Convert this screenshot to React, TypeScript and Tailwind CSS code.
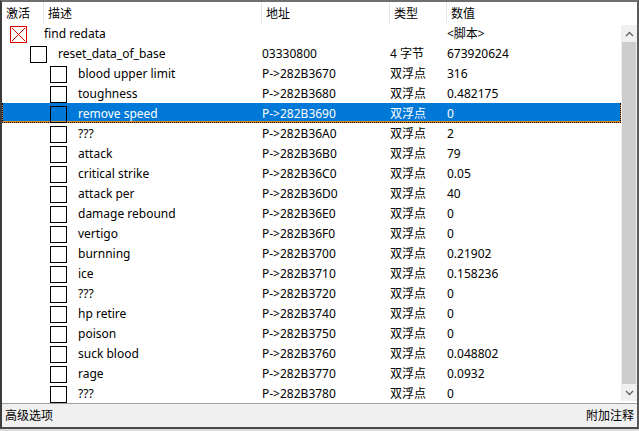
import { ReactNode } from 'react';

type Entry = {
  desc: string;
  level: number;
  addr: string;
  type: string;
  value: string;
  script?: boolean;
};

const entries: Entry[] = [
  { desc: 'find redata', level: 0, addr: '', type: '', value: '<脚本>', script: true },
  { desc: 'reset_data_of_base', level: 1, addr: '03330800', type: '4 字节', value: '673920624' },
  { desc: 'blood upper limit', level: 2, addr: 'P->282B3670', type: '双浮点', value: '316' },
  { desc: 'toughness', level: 2, addr: 'P->282B3680', type: '双浮点', value: '0.482175' },
  { desc: 'remove speed', level: 2, addr: 'P->282B3690', type: '双浮点', value: '0' },
  { desc: '???', level: 2, addr: 'P->282B36A0', type: '双浮点', value: '2' },
  { desc: 'attack', level: 2, addr: 'P->282B36B0', type: '双浮点', value: '79' },
  { desc: 'critical strike', level: 2, addr: 'P->282B36C0', type: '双浮点', value: '0.05' },
  { desc: 'attack per', level: 2, addr: 'P->282B36D0', type: '双浮点', value: '40' },
  { desc: 'damage rebound', level: 2, addr: 'P->282B36E0', type: '双浮点', value: '0' },
  { desc: 'vertigo', level: 2, addr: 'P->282B36F0', type: '双浮点', value: '0' },
  { desc: 'burnning', level: 2, addr: 'P->282B3700', type: '双浮点', value: '0.21902' },
  { desc: 'ice', level: 2, addr: 'P->282B3710', type: '双浮点', value: '0.158236' },
  { desc: '???', level: 2, addr: 'P->282B3720', type: '双浮点', value: '0' },
  { desc: 'hp retire', level: 2, addr: 'P->282B3740', type: '双浮点', value: '0' },
  { desc: 'poison', level: 2, addr: 'P->282B3750', type: '双浮点', value: '0' },
  { desc: 'suck blood', level: 2, addr: 'P->282B3760', type: '双浮点', value: '0.048802' },
  { desc: 'rage', level: 2, addr: 'P->282B3770', type: '双浮点', value: '0.0932' },
  { desc: '???', level: 2, addr: 'P->282B3780', type: '双浮点', value: '0' },
];

const SELECTED = 4;

const indent = ['ml-[8px]', 'ml-[28px]', 'ml-[48px]'];

function CheckBox({ script }: { script?: boolean }) {
  if (script) {
    return (
      <svg width="17" height="17" viewBox="0 0 17 17" className="shrink-0">
        <rect x="0.5" y="0.5" width="16" height="16" fill="white" stroke="#e00000" />
        <path d="M2 2 L15 15 M15 2 L2 15" stroke="#e00000" strokeWidth="1" />
      </svg>
    );
  }
  return <div className="h-[17px] w-[17px] shrink-0 border border-black" />;
}

function HeaderCell({ w, first, children }: { w: string; first?: boolean; children: ReactNode }) {
  return (
    <div className={`${w} flex h-full items-center pl-[4px] pt-[2px] ${first ? '' : 'border-l border-[#e5e5e5]'}`}>
      {children}
    </div>
  );
}

function RowContent({ e }: { e: Entry }) {
  return (
    <div className="flex h-[20px] w-full items-center pt-[2px]">
      <div className="flex w-[259px] items-center">
        <div className={`${indent[e.level]} mt-[1px]`}>
          <CheckBox script={e.script} />
        </div>
        <span className={e.level === 0 ? 'ml-[17px]' : 'ml-[11px]'}>{e.desc}</span>
      </div>
      <div className="w-[128px] pl-px">{e.addr}</div>
      <div className="w-[57px] pl-px">{e.type}</div>
      <div className="flex-1 pl-px">{e.value}</div>
    </div>
  );
}

function Row({ e, selected }: { e: Entry; selected: boolean }) {
  if (selected) {
    // focus rect: black dots over an orange backing, blue fill inside
    return (
      <div className="h-[20px] border border-dotted border-black bg-[#d98a22]">
        <div className="h-full bg-[#0078d7] text-white">
          <div className="-ml-px -mt-px w-[calc(100%+2px)]">
            <RowContent e={e} />
          </div>
        </div>
      </div>
    );
  }
  return <RowContent e={e} />;
}

function Chevron({ up }: { up?: boolean }) {
  return (
    <div className="flex h-[17px] items-center justify-center">
      <svg width="9" height="6" viewBox="0 0 9 6">
        <path d={up ? 'M1 5 L4.5 1.5 L8 5' : 'M1 1 L4.5 4.5 L8 1'} fill="none" stroke="#606060" strokeWidth="1.3" />
      </svg>
    </div>
  );
}

export default function App() {
  return (
    <div
      className="flex h-[431px] w-[639px] flex-col bg-[#dcdcdc] text-[12px] text-black"
      style={{ fontFamily: '"Noto Sans", "Noto Sans CJK SC", sans-serif' }}
    >
      <div className="flex h-[429px] flex-col border-l-2 border-r-2 border-t-2 border-b-2 border-l-[#3c3c3c] border-r-[#5a5a5a] border-t-[#6e6e6e] border-b-[#4a4a4a] bg-white">
        <div className="flex h-[21px] shrink-0 items-center">
          <HeaderCell w="w-[41px]" first>激活</HeaderCell>
          <HeaderCell w="w-[218px]">描述</HeaderCell>
          <HeaderCell w="w-[128px]">地址</HeaderCell>
          <HeaderCell w="w-[57px]">类型</HeaderCell>
          <HeaderCell w="flex-1">数值</HeaderCell>
        </div>

        <div className="flex min-h-0 flex-1">
          <div className="flex-1 overflow-hidden">
            {entries.map((e, i) => (
              <Row key={i} e={e} selected={i === SELECTED} />
            ))}
          </div>
          <div className="mt-[2px] mb-[2px] flex w-[16px] flex-col bg-[#f0f0f0]">
            <Chevron up />
            <div className="mx-px flex-1 bg-[#cdcdcd]" />
            <Chevron />
          </div>
        </div>

        <div className="flex h-[24px] shrink-0 items-center justify-between border-t border-[#a0a0a0] bg-[#f0f0f0] px-[3px] pt-px">
          <span>高级选项</span>
          <span>附加注释</span>
        </div>
      </div>
    </div>
  );
}
